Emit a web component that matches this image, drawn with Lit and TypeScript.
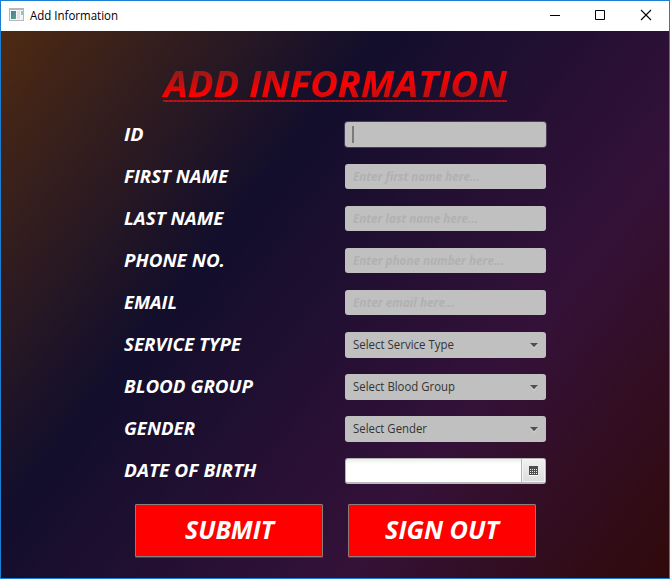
import { LitElement, html, svg, css } from "lit";
import { customElement, property } from "lit/decorators.js";

type Kind = "focused" | "text" | "combo" | "date";

interface Field {
  label: string;
  labelWidth: number;
  kind: Kind;
  hint: string;
  hintWidth: number;
}

const FIELDS: Field[] = [
  { label: "ID", labelWidth: 19.5, kind: "focused", hint: "", hintWidth: 0 },
  { label: "FIRST NAME", labelWidth: 104, kind: "text", hint: "Enter first name here...", hintWidth: 127 },
  { label: "LAST NAME", labelWidth: 99.5, kind: "text", hint: "Enter last name here...", hintWidth: 125 },
  { label: "PHONE NO.", labelWidth: 101, kind: "text", hint: "Enter phone number here...", hintWidth: 151 },
  { label: "EMAIL", labelWidth: 53, kind: "text", hint: "Enter email here...", hintWidth: 102 },
  { label: "SERVICE TYPE", labelWidth: 117, kind: "combo", hint: "Select Service Type", hintWidth: 101 },
  { label: "BLOOD GROUP", labelWidth: 129, kind: "combo", hint: "Select Blood Group", hintWidth: 102 },
  { label: "GENDER", labelWidth: 71, kind: "combo", hint: "Select Gender", hintWidth: 74 },
  { label: "DATE OF BIRTH", labelWidth: 132.5, kind: "date", hint: "", hintWidth: 0 },
];

/* One line of text set to an exact advance width. */
const line = (text: string, width: number, height: number, baseline: number) => html`
  <svg class="line" width=${width} height=${height}>
    ${svg`<text x="0" y=${baseline} textLength=${width} lengthAdjust="spacingAndGlyphs">${text}</text>`}
  </svg>
`;

@customElement("form-field")
export class FormField extends LitElement {
  @property({ attribute: false }) field!: Field;

  static styles = css`
    :host { display: grid; grid-template-columns: 221px 201px; height: 42px; box-sizing: border-box; padding-top: 8px; align-items: start; }
    .line { display: block; overflow: visible; }
    .label { font: italic 700 18.6px "Open Sans", "Noto Sans", sans-serif; fill: #fff; }
    .box { box-sizing: border-box; height: 25px; border-radius: 3px; background: #c0c0c0; padding-left: 8px; display: flex; align-items: flex-start; }
    .focused { box-shadow: 0 0 0 1px rgba(160, 150, 170, 0.35); }
    .text { font: italic 700 12.3px "Open Sans", "Noto Sans", sans-serif; fill: #b1b1b1; }
    .caret { width: 2px; height: 17px; margin: 4px 0 0 -1px; background: #7b7b7b; }
    .combo { height: 26px; justify-content: space-between; padding-right: 8px; font: 12.4px "Open Sans", "Noto Sans", sans-serif; fill: #333; }
    .arrow { display: block; margin-top: 11px; }
    .date { height: 26px; border: 1px solid #b5b5b5; border-bottom: 2px solid #bababa; background: linear-gradient(#ececec, #fff 5px); padding: 0; justify-content: flex-end; overflow: hidden; }
    .picker { box-sizing: border-box; width: 24px; height: 23px; border-left: 1px solid #b5b5b5; background: linear-gradient(#f1f1f1, #dcdcdc); box-shadow: inset 0 0 0 1px #f4f4f4; padding: 7px 0 0 7px; }
    .picker svg { display: block; }
  `;

  private control() {
    const f = this.field;
    switch (f.kind) {
      case "focused":
        return html`<div class="box focused"><div class="caret"></div></div>`;
      case "text":
        return html`<div class="box text">${line(f.hint, f.hintWidth, 25, 17)}</div>`;
      case "combo":
        return html`<div class="box combo">
          ${line(f.hint, f.hintWidth, 26, 17)}
          <svg class="arrow" width="8" height="6"><path d="M0 1h8L4 6z" fill="#d4d4d4" /><path d="M0 0h8L4 4.3z" fill="#505050" /></svg>
        </div>`;
      case "date":
        return html`<div class="box date">
          <div class="picker">
            <svg width="9" height="10">
              <path d="M0 9h9v1H0z" fill="#fff" />
              <path d="M0 0h9v9H0z" fill="#4d4d4d" />
              <path d="M1 3.5h7M1 5.5h7M1 7.5h7" stroke="#e8e8e8" stroke-dasharray="1 1" />
            </svg>
          </div>
        </div>`;
    }
  }

  render() {
    return html`
      <div class="label">${line(this.field.label, this.field.labelWidth, 26, 19)}</div>
      ${this.control()}
    `;
  }
}

@customElement("app-root")
export class AppRoot extends LitElement {
  static styles = css`
    :host { display: block; }
    .window { box-sizing: border-box; width: 670px; height: 579px; border: 1px solid #1a7fd4; display: flex; flex-direction: column; overflow: hidden; }
    .bar { flex: none; height: 30px; background: #fff; display: flex; align-items: flex-start; padding-left: 8px; font: 12px "Open Sans", "Noto Sans", sans-serif; fill: #000; }
    .app-icon { display: block; margin: 7px 6px 0 0; }
    .line { display: block; overflow: visible; }
    .controls { display: block; margin-left: auto; }
    .content { flex: 1; display: flex; flex-direction: column; align-items: center;
      background: linear-gradient(128deg, #4e2a12 0%, #120e2c 35%, #341138 70%, #300a0a 100%); }
    .heading { width: 344px; height: 83px; padding-top: 40px; box-sizing: border-box; font: italic 700 36.4px "Open Sans", "Noto Sans", sans-serif; }
    .rule { height: 2px; margin-top: 3px; background: repeating-linear-gradient(120deg, #d01014 0, #9a1218 1.8px, #d01014 3.6px); }
    .form { width: 422px; display: block; }
    .buttons { display: flex; gap: 25px; padding-top: 12px; }
    .button { box-sizing: border-box; width: 188px; height: 53px; border: 1px solid #8c7c7c; background: #f00; box-shadow: 0 1px 0 0 #d80010; border-radius: 1px; display: flex; justify-content: center; padding-left: 1px;
      font: italic 700 24.2px "Open Sans", "Noto Sans", sans-serif; fill: #fff; }
  `;

  render() {
    return html`
      <div class="window">
        <div class="bar">
          <svg class="app-icon" width="15" height="13">
            <defs>
              <linearGradient id="pane" x1="0" y1="0" x2="1" y2="1"><stop offset="0" stop-color="#4e78a8" /><stop offset="1" stop-color="#52a878" /></linearGradient>
            </defs>
            <path d="M0 0h15v13H0z" fill="#b4b8bc" />
            <path d="M1 2h13v10H1z" fill="#f4f4f6" />
            <path d="M2 3h5v8H2z" fill="url(#pane)" />
            <path d="M8 3h3v8H8z" fill="#dfe2e6" />
            <path d="M12 3h2v4h-2z" fill="#9cc4b4" />
          </svg>
          ${line("Add Information", 88, 28, 19)}
          <svg class="controls" width="120" height="30" fill="none" stroke="#000">
            <path d="M1 14.5h10M46.5 9.5h9v9h-9z" />
            <path d="M92 9l10 10M102 9l-10 10" stroke-width="1.1" />
          </svg>
        </div>
        <div class="content">
          <div class="heading">
            <svg class="line" width="344" height="26">
              <defs>
                <linearGradient id="shine" gradientUnits="userSpaceOnUse" gradientTransform="scale(344 27)" x1="0" y1="0" x2="1" y2="1">
                  <stop offset="0" stop-color="#8c1c1c" /><stop offset="0.5" stop-color="#ff0000" /><stop offset="1" stop-color="#9c1616" />
                </linearGradient>
              </defs>
              <text x="0.5" y="26.3" textLength="343" lengthAdjust="spacingAndGlyphs" fill="url(#shine)">ADD INFORMATION</text>
            </svg>
            <div class="rule"></div>
          </div>
          <div class="form">${FIELDS.map((f) => html`<form-field .field=${f}></form-field>`)}</div>
          <div class="buttons">
            <div class="button">${line("SUBMIT", 89, 51, 34.4)}</div>
            <div class="button">${line("SIGN OUT", 114, 51, 34.4)}</div>
          </div>
        </div>
      </div>
    `;
  }
}
